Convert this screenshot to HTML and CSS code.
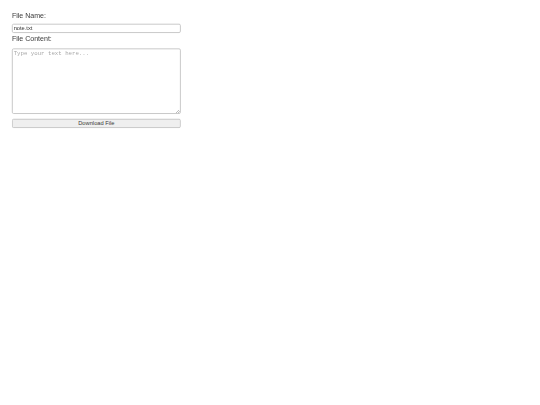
FILE: index.html
```html
<!DOCTYPE html>
<html>
<head>
<meta charset="utf-8">
<link rel="stylesheet" href="styles.css">
</head>
<body>
<div class="form">
  <label class="label label-first" for="name">File Name:</label>
  <input class="field" id="name" type="text" value="note.txt">
  <label class="label label-second" for="content">File Content:</label>
  <textarea class="area" id="content" placeholder="Type your text here..."></textarea>
  <button class="btn" type="button">Download File</button>
</div>
</body>
</html>
```

FILE: styles.css
```css
html, body {
  margin: 0;
  padding: 0;
  background: #ffffff;
}
.form {
  transform: scale(0.44);
  transform-origin: 0 0;
  display: flex;
  flex-direction: column;
  width: 384px;
  padding: 27px 0 0 27px;
  font-family: "Liberation Sans", Arial, sans-serif;
}
.label {
  display: block;
  font-size: 16px;
  line-height: 20px;
  color: #3a3a3a;
}
.label-first { margin-bottom: 7px; }
.label-second { margin-top: 4px; margin-bottom: 11px; }
.field {
  box-sizing: border-box;
  height: 21px;
  width: 384px;
  margin: 0;
  padding: 0 2px;
  font-family: "Liberation Sans", Arial, sans-serif;
  font-size: 13px;
  color: #333;
  border: 2px solid #c2c2c2;
  border-radius: 4px;
  background: #fff;
  outline: none;
}
.area {
  box-sizing: border-box;
  height: 149px;
  width: 384px;
  margin: 0;
  padding: 2px;
  font-family: "Liberation Mono", "DejaVu Sans Mono", monospace;
  font-size: 13px;
  border: 2px solid #c2c2c2;
  border-radius: 4px;
  background: #fff;
}
.area::placeholder { color: #a8a8a8; }
.btn {
  box-sizing: border-box;
  height: 21px;
  width: 384px;
  margin: 11px 0 0 0;
  padding: 0;
  font-family: "Liberation Sans", Arial, sans-serif;
  font-size: 13px;
  line-height: 16px;
  color: #3a3a3a;
  background: #efefef;
  border: 2px solid #c2c2c2;
  border-radius: 4px;
}
```
